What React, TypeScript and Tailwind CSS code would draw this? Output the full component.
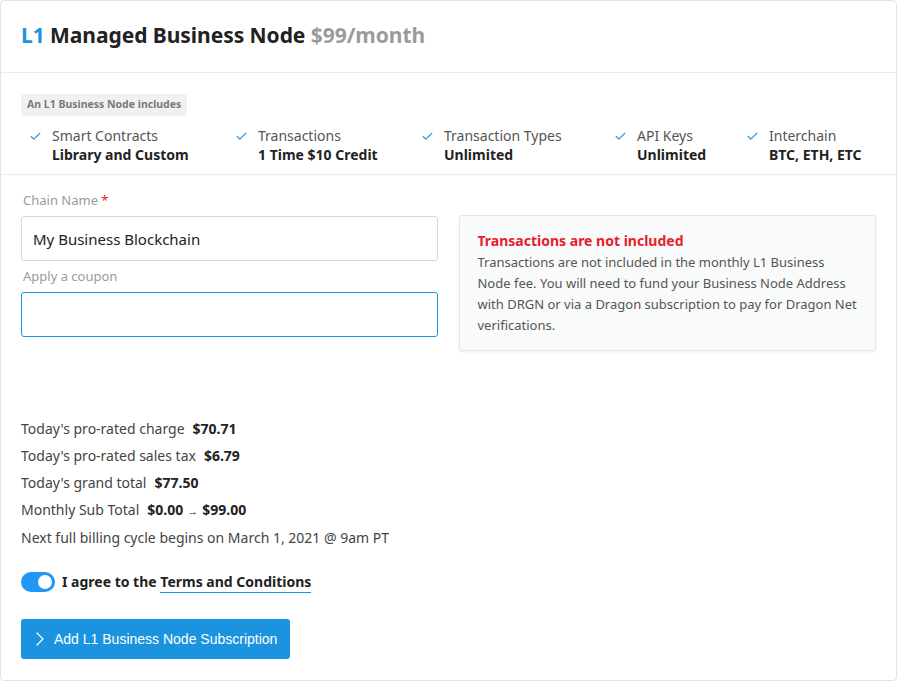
import { Check, ChevronRight } from 'lucide-react';

const features = [
  { label: 'Smart Contracts', value: 'Library and Custom', w: 'w-[206px]' },
  { label: 'Transactions', value: '1 Time $10 Credit', w: 'w-[186px]' },
  { label: 'Transaction Types', value: 'Unlimited', w: 'w-[193px]' },
  { label: 'API Keys', value: 'Unlimited', w: 'w-[132px]' },
  { label: 'Interchain', value: 'BTC, ETH, ETC', w: 'w-auto' },
];

const totals = [
  { label: "Today's pro-rated charge", value: '$70.71' },
  { label: "Today's pro-rated sales tax", value: '$6.79' },
  { label: "Today's grand total", value: '$77.50' },
];

export default function App() {
  return (
    <div className="w-[897px] h-[681px] bg-white font-['Noto_Sans',sans-serif]">
      <div className="h-[681px] border border-[#e4e4e4] rounded-[4px] flex flex-col">
        {/* Header */}
        <div className="h-[72px] border-b border-[#ececec] px-5 flex items-center">
          <h1 className="text-[21px] tracking-[-0.05px] font-bold text-[#222] -mt-[2px]">
            <span className="text-[#1e94e0]">L1</span> Managed Business Node{' '}
            <span className="text-[#9b9b9f]">$99/month</span>
          </h1>
        </div>

        {/* Includes */}
        <div className="border-b border-[#ececec] pt-[17px] pb-[10px] px-5">
          <span className="inline-block bg-[#f1f1f1] rounded-[3px] px-[6px] pt-[3px] pb-[5px] text-[10.5px] leading-[14px] font-bold text-[#7a7a7a]">
            An L1 Business Node includes
          </span>
          <div className="flex pl-[8px] mt-[10px]">
            {features.map((f) => (
              <div key={f.label} className={`flex gap-[10px] ${f.w}`}>
                <Check size={13} strokeWidth={2} className="text-[#1e94e0] mt-[4px] shrink-0" />
                <div className="text-[14px] leading-[19px]">
                  <div className="text-[#555]">{f.label}</div>
                  <div className="font-bold text-[#222]">{f.value}</div>
                </div>
              </div>
            ))}
          </div>
        </div>

        {/* Form */}
        <div className="px-5 pt-[16px] flex gap-[21px]">
          <div className="w-[418px]">
            <label className="block text-[13px] leading-[18px] text-[#9a9a9a] px-[2px]">
              Chain Name <span className="text-[#e5202a]">*</span>
            </label>
            <input
              defaultValue="My Business Blockchain"
              className="mt-[7px] w-full h-[45px] border border-[#d6dade] rounded-[3px] px-[11px] text-[15px] text-[#222] outline-none"
            />
            <label className="block mt-[6px] text-[13px] leading-[18px] text-[#9a9a9a] px-[2px]">
              Apply a coupon
            </label>
            <input className="mt-[7px] w-full h-[45px] border border-[#1e94e0] rounded-[3px] px-[11px] text-[15px] outline-none" />
          </div>
          <div className="w-[417px] h-[136px] mt-[24px] bg-[#f9fafa] border border-[#e6e6e6] rounded-[3px] shadow-[0_1px_3px_rgba(0,0,0,0.08)] px-[17px] pt-[14px]">
            <div className="text-[14px] leading-[22px] font-bold text-[#e5202a]">Transactions are not included</div>
            <p className="text-[13px] leading-[21px] text-[#555]">
              Transactions are not included in the monthly L1 Business Node fee. You will need to fund your Business
              Node Address with DRGN or via a Dragon subscription to pay for Dragon Net verifications.
            </p>
          </div>
        </div>

        {/* Totals */}
        <div className="px-5 mt-[68px] flex flex-col gap-[8px] text-[14px] leading-[19px] text-[#444]">
          {totals.map((t) => (
            <div key={t.label}>
              {t.label}
              <span className="ml-[8px] font-bold text-[#222]">{t.value}</span>
            </div>
          ))}
          <div>
            Monthly Sub Total
            <span className="ml-[8px] font-bold text-[#222]">$0.00</span>
            <span className="mx-[4px] text-[11px] text-[#222]">→</span>
            <span className="font-bold text-[#222]">$99.00</span>
          </div>
          <div>Next full billing cycle begins on March 1, 2021 @ 9am PT</div>
        </div>

        {/* Agree */}
        <div className="px-5 mt-[24px] flex items-center gap-[7px]">
          <div className="w-[34px] h-[20px] rounded-full bg-[#2196f3] flex items-center justify-end pr-[3px]">
            <div className="w-[14px] h-[14px] rounded-full bg-white" />
          </div>
          <span className="text-[14px] font-bold text-[#222]">
            I agree to the{' '}
            <span className="border-b border-[#1e94e0] pb-[1px]">Terms and Conditions</span>
          </span>
        </div>

        {/* Submit */}
        <div className="px-5 mt-[27px]">
          <button className="h-[40px] w-[269px] bg-[#1b93df] rounded-[3px] flex items-center gap-[2px] pl-[7px] text-white text-[14px] font-['Liberation_Sans',sans-serif]">
            <ChevronRight size={24} strokeWidth={1.2} />
            Add L1 Business Node Subscription
          </button>
        </div>
      </div>
    </div>
  );
}
